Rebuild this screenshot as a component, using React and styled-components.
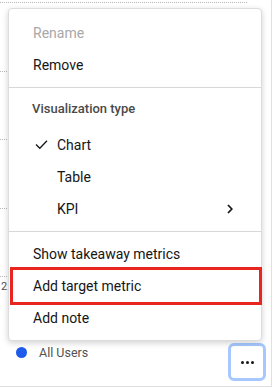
import styled, { createGlobalStyle } from "styled-components";

const GlobalStyle = createGlobalStyle`
  html, body {
    margin: 0;
    padding: 0;
    background: #ffffff;
    font-family: Roboto, "Noto Sans", "Liberation Sans", sans-serif;
    color: #161616;
  }
`;

const Card = styled.div`
  position: relative;
  width: 271px;
  height: 386px;
  border-right: 1px solid #e0e0e0;
  border-bottom: 1px solid #e0e0e0;
  background: #ffffff;
  display: flex;
  flex-direction: column;
  overflow: hidden;
`;

const ChartArea = styled.div`
  position: relative;
  height: 343px;
  padding-top: 2px;
  box-sizing: border-box;
  display: flex;
  flex-direction: column;
  gap: 67.5px;
`;

const GridLine = styled.div`
  width: 247px;
  height: 0;
  border-top: 1px dotted #b8b8b8;
`;

const TickLabel = styled.span`
  position: absolute;
  left: 1px;
  top: 280px;
  font-size: 11px;
  color: #525252;
`;

const LegendRow = styled.div`
  display: flex;
  align-items: flex-start;
  justify-content: space-between;
  padding: 0 4px 0 16px;
`;

const LegendItem = styled.div`
  display: flex;
  align-items: center;
  gap: 12px;
  height: 18px;
  font-size: 12.5px;
  color: #525252;
`;

const Swatch = styled.span`
  width: 11px;
  height: 11px;
  border-radius: 50%;
  background: ${(p) => p.color};
`;

const MoreButton = styled.button`
  width: 38px;
  height: 38px;
  box-sizing: border-box;
  border: 3px solid #a6c8ff;
  border-radius: 6px;
  background: #ffffff;
  display: flex;
  align-items: center;
  justify-content: center;
  gap: 2px;
  padding: 0;
  margin-right: 1px;
`;

const Dot = styled.span`
  width: 3px;
  height: 3px;
  border-radius: 50%;
  background: #161616;
`;

const Menu = styled.div`
  position: absolute;
  top: 8px;
  left: 8px;
  width: 254px;
  box-sizing: border-box;
  border: 1px solid #dcdcdc;
  border-radius: 4px;
  background: #ffffff;
  box-shadow: 0 2px 6px rgba(0, 0, 0, 0.18);
  display: flex;
  flex-direction: column;
`;

const Group = styled.div`
  padding: ${(p) => (p.first ? "8px 0 6px" : "6px 0")};
  & + & {
    border-top: 1px solid #d8d8d8;
  }
`;

const Heading = styled.div`
  height: 41px;
  display: flex;
  align-items: center;
  padding: 0 0 0 23px;
  margin-top: -6px;
  font-size: 13px;
  font-weight: 500;
  color: #4a4a4a;
`;

const Item = styled.div`
  position: relative;
  height: 32px;
  display: flex;
  align-items: center;
  padding: ${(p) => (p.indent ? "0 0 0 48px" : "0 0 0 24px")};
  padding-right: 28px;
  font-size: 14px;
  color: ${(p) => (p.disabled ? "#a8a8a8" : "#161616")};

  ${(p) =>
    p.highlighted &&
    `
    &::after {
      content: "";
      position: absolute;
      top: -3px;
      bottom: -3px;
      left: 1px;
      right: -1px;
      border: 3px solid #e8251f;
    }
  `}
`;

const Label = styled.span`
  flex: 1;
`;

const CheckSlot = styled.span`
  position: absolute;
  left: 26px;
  top: 10px;
  display: flex;
`;

const Check = () => (
  <svg width="13" height="11" viewBox="0 0 13 11" fill="none">
    <path d="M1 5.5 L4.8 9.3 L12 1.8" stroke="#161616" strokeWidth="1.3" />
  </svg>
);

const Chevron = () => (
  <svg width="6" height="10" viewBox="0 0 6 10" fill="none">
    <path d="M1 1 L4.8 5 L1 9" stroke="#161616" strokeWidth="1.7" />
  </svg>
);

export default function App() {
  return (
    <>
      <GlobalStyle />
      <Card>
        <ChartArea>
          <GridLine />
          <GridLine />
          <GridLine />
          <GridLine />
          <GridLine />
          <TickLabel>2</TickLabel>
        </ChartArea>
        <LegendRow>
          <LegendItem>
            <Swatch color="#1f5bea" />
            All Users
          </LegendItem>
          <MoreButton aria-label="More">
            <Dot />
            <Dot />
            <Dot />
          </MoreButton>
        </LegendRow>

        <Menu>
          <Group first>
            <Item disabled>Rename</Item>
            <Item>Remove</Item>
          </Group>
          <Group>
            <Heading>Visualization type</Heading>
            <Item indent>
              <CheckSlot>
                <Check />
              </CheckSlot>
              Chart
            </Item>
            <Item indent>Table</Item>
            <Item indent>
              <Label>KPI</Label>
              <Chevron />
            </Item>
          </Group>
          <Group>
            <Item>Show takeaway metrics</Item>
            <Item highlighted>Add target metric</Item>
            <Item>Add note</Item>
          </Group>
        </Menu>
      </Card>
    </>
  );
}
